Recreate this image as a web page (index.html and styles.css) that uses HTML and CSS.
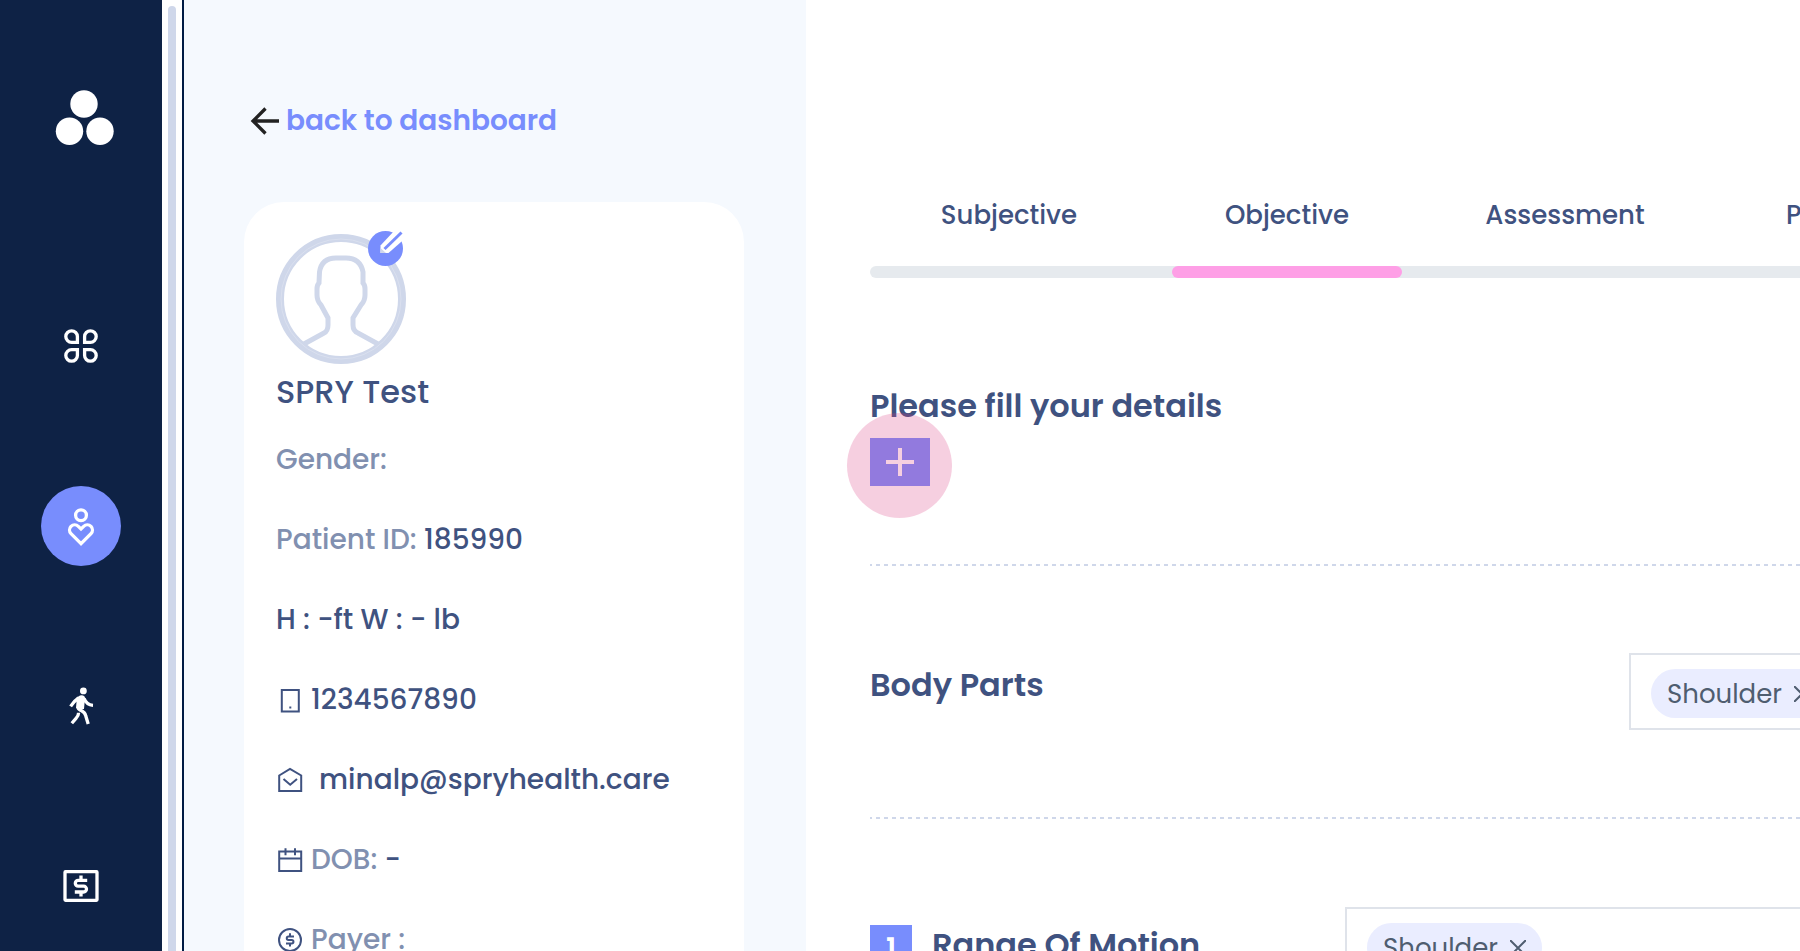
FILE: index.html
```html
<!DOCTYPE html>
<html lang="en">
<head>
<meta charset="UTF-8">
<meta name="viewport" content="width=device-width, initial-scale=1.0">
<title>SPRY - Objective</title>
<link rel="stylesheet" href="styles.css">
</head>
<body>
  <div class="app">
    <nav class="rail">
      <svg class="logo" viewBox="0 0 60 56" aria-label="SPRY">
        <circle cx="30" cy="14" r="13.7"/>
        <circle cx="15.5" cy="41.2" r="13.7"/>
        <circle cx="46" cy="41.2" r="13.7"/>
      </svg>
      <a class="rail-link" href="#" aria-label="Dashboard">
        <svg class="rail-icon" viewBox="-20 -20 40 40">
          <path d="M-3.6-3.6V-9.4A5.8 5.8 0 1 0-9.4-3.6Z"/>
          <path d="M3.6-3.6V-9.4A5.8 5.8 0 1 1 9.4-3.6Z"/>
          <path d="M-3.6 3.6V9.4A5.8 5.8 0 1 1-9.4 3.6Z"/>
          <path d="M3.6 3.6V9.4A5.8 5.8 0 1 0 9.4 3.6Z"/>
        </svg>
      </a>
      <a class="rail-link active" href="#" aria-label="Patients">
        <svg class="rail-icon" viewBox="0 0 40 40">
          <circle cx="20" cy="9.3" r="5.4"/>
          <path d="M20 37.6 10 27.6a5.2 5.2 0 0 1 0-7.2 5.2 5.2 0 0 1 7.3 0L20 23l2.7-2.6a5.2 5.2 0 0 1 7.3 0 5.2 5.2 0 0 1 0 7.2z"/>
        </svg>
      </a>
      <a class="rail-link" href="#" aria-label="Exercises">
        <svg class="rail-icon" viewBox="0 0 40 40">
          <circle class="solid" cx="22.4" cy="4.9" r="3.4"/>
          <path class="solid" d="M15.4 11.8 19 9.6q2.6-.8 4.8 1.2L24.5 15l-.9 1.4-.6 6.5-3.4.6-4.6-1.6.6-7z"/>
          <path d="M9.6 20.4q3.6-5.6 8-8.4M23 12.4q2.6 6.6 9 6.9M17 21.5q.6 2.2 3.6 3.3 3.4 1.7 4.2 5.2l2.400 8"/>
          <path d="M17.6 26.8q0 3-2.6 5.600l-4.200 4.900"/>
        </svg>
      </a>
      <a class="rail-link" href="#" aria-label="Billing">
        <svg class="rail-icon" viewBox="0 0 40 40">
          <rect x="4" y="5.7" width="32" height="28.6" rx=".5"/>
          <path d="M26.2 14.400h-9a2.900 2.900 0 0 0 0 5.800h5.400a2.900 2.900 0 0 1 0 5.800h-8.800M20 9.400v5M20 26v4.600"/>
        </svg>
      </a>
    </nav>
    <div class="scroll-track"><div class="scroll-thumb"></div></div>

    <aside class="patient-panel">
      <a class="back-link" href="#">
        <svg class="back-icon" viewBox="0 0 30 30"><path d="M29 15H3M15.5 2.500 3 15l12.500 12.500"/></svg>
        back to dashboard
      </a>

      <div class="patient-card">
        <div class="avatar">
          <svg class="avatar-image" viewBox="0 0 130 130">
            <circle class="ring" cx="65" cy="65" r="61"/>
            <circle class="ring-line" cx="65" cy="65" r="60"/>
            <path d="M28 110 48 99Q52 97 52 91V84L45 71Q41 67 41 61V55Q41 51 43 49L43.5 38C45 28 51 24 60 24H70C79 24 85 28 87 38V49Q89 51 89 55V61Q89 67 85 71L77 84V91Q77 97 82 99L102 110"/>
          </svg>
          <button class="avatar-edit" type="button" aria-label="Edit photo">
            <svg viewBox="0 0 35 35">
              <circle cx="17.5" cy="17.5" r="17.5"/>
              <path class="pencil" d="M12.5 22v-7.500L27-1l9.500 9L20.500 22z"/>
              <path class="tip" d="M12.5 22v-5l5.500 5z"/>
              <path class="lead" d="M16.5 18 33.500 1.500"/>
            </svg>
          </button>
        </div>
        <h1 class="patient-name">SPRY Test</h1>

        <ul class="info">
          <li><span class="muted">Gender:</span></li>
          <li><span class="muted">Patient ID:</span> 185990</li>
          <li>H : -ft W : - lb</li>
          <li class="with-icon">
            <svg viewBox="0 0 28 28"><path d="M5.8 4h17v21.500h-17zM13.300 21.500h2"/></svg>
            1234567890
          </li>
          <li class="with-icon email">
            <svg viewBox="0 0 28 28"><path d="M3.2 9.500 14 3l11.200 6.500V25h-22zM7.500 13l6.700 5.800L21 13"/></svg>
            minalp@spryhealth.care
          </li>
          <li class="with-icon">
            <svg viewBox="0 0 28 28"><path d="M3.2 5.500h22V25h-22zM3.200 12.500h22M9.500 2.200v7M19 2.200v7"/></svg>
            <span><span class="muted">DOB:</span> -</span>
          </li>
          <li class="with-icon">
            <svg viewBox="0 0 28 28"><circle cx="14" cy="14" r="11"/><path d="M18 10.500h-5.500a1.700 1.700 0 0 0 0 3.500h3.200a1.700 1.700 0 0 1 0 3.500H10M14 7.300v3M14 17.500v3"/></svg>
            <span class="muted">Payer :</span>
          </li>
        </ul>
      </div>
    </aside>

    <main class="content">
      <div class="tabs">
        <a class="tab" href="#">Subjective</a>
        <a class="tab current" href="#">Objective</a>
        <a class="tab" href="#">Assessment</a>
        <a class="tab last" href="#">Plan</a>
      </div>
      <div class="tab-track"></div>

      <section class="details">
        <h2>Please fill your details</h2>
        <button class="add-btn" type="button" aria-label="Add details">
          <svg viewBox="0 0 28 28"><path d="M14 0v28M0 14h28"/></svg>
        </button>
      </section>

      <section class="body-parts">
        <h2>Body Parts</h2>
        <div class="select">
          <span class="chip">Shoulder
            <button type="button" aria-label="Remove Shoulder"><svg viewBox="0 0 16 16"><path d="M0 0 16 16M16 0 0 16"/></svg></button>
          </span>
        </div>
      </section>

      <section class="motion">
        <span class="step">1</span>
        <h2>Range Of Motion</h2>
        <div class="select">
          <span class="chip">Shoulder
            <button type="button" aria-label="Remove Shoulder"><svg viewBox="0 0 16 16"><path d="M0 0 16 16M16 0 0 16"/></svg></button>
          </span>
        </div>
      </section>
    </main>
  </div>
</body>
</html>
```
FILE: styles.css
```css
* {
  box-sizing: border-box;
}

body {
  margin: 0;
  background-color: #fff;
  color: #3f5280;
  font-family: Poppins, Inter, sans-serif;
  font-size: 28px;
  font-weight: 500;
  line-height: 40px;
}

a {
  color: inherit;
  text-decoration: none;
}

button {
  border: none;
  padding: 0;
  cursor: pointer;
}

svg {
  display: block;
  fill: none;
  flex-shrink: 0;
}

h1, h2 {
  margin: 0;
  font-size: 32px;
}

h2 {
  font-weight: 600;
}

.app {
  display: flex;
  height: 100vh;
  overflow: hidden;
}

/* Left navigation */
.rail {
  display: flex;
  flex-direction: column;
  align-items: center;
  flex: 0 0 162px;
  padding-top: 90px;
  background-color: #0e2245;
}

.logo {
  width: 60px;
  height: 56px;
  margin: 0 0 160px 6px;
  fill: #fff;
}

.rail-link {
  display: flex;
  align-items: center;
  justify-content: center;
  flex-shrink: 0;
  width: 80px;
  height: 80px;
  margin-bottom: 100px;
  border-radius: 50%;
}

.rail-link.active {
  background-color: #788dfd;
}

.rail-icon {
  width: 40px;
  height: 40px;
  stroke: #fff;
  stroke-width: 3.3;
}

.rail-icon .solid {
  fill: #fff;
  stroke: none;
}

.scroll-track {
  flex: 0 0 22px;
  padding: 6px 6px 0;
  border-right: 2px solid #001b44;
}

.scroll-thumb {
  width: 8px;
  height: 100%;
  border-radius: 4px 4px 0 0;
  background-color: #cfd7ea;
}

/* Patient column */
.patient-panel {
  flex: 0 0 622px;
  padding: 101px 62px 0 60px;
  background-color: #f5f9fe;
}

.back-link {
  display: flex;
  align-items: center;
  gap: 6px;
  margin: 0 0 61px 6px;
  color: #788dfd;
  font-weight: 600;
}

.back-icon {
  width: 30px;
  height: 30px;
  stroke: #222;
  stroke-width: 3.3;
}

.patient-card {
  min-height: 100%;
  padding: 32px;
  border-radius: 40px;
  background-color: #fff;
}

.avatar {
  position: relative;
  width: 130px;
}

.avatar-image {
  stroke: #cfd7ea;
  stroke-width: 5;
}

.avatar-image .ring {
  stroke-width: 8;
}

.avatar-image .ring-line {
  stroke: #dae0ef;
  stroke-width: 1;
}

.avatar-edit {
  position: absolute;
  top: -3px;
  right: 3px;
  width: 35px;
  height: 35px;
  background: none;
}

.avatar-edit svg {
  fill: #788dfd;
}

.avatar-edit .pencil {
  fill: #fff;
}

.avatar-edit .tip {
  fill: #cfd7ea;
}

.avatar-edit .lead {
  stroke: #788dfd;
  stroke-width: 3;
}

.patient-name {
  margin-top: 8px;
  font-weight: 500;
}

.info {
  display: flex;
  flex-direction: column;
  gap: 40px;
  margin: 28px 0 0;
  padding: 0;
  list-style: none;
  white-space: nowrap;
}

.info .with-icon {
  display: flex;
  align-items: center;
  gap: 7px;
}

.info .email {
  gap: 15px;
}

.info svg {
  width: 28px;
  height: 28px;
  stroke: #3f5280;
  stroke-width: 2;
}

.muted {
  color: #8190b0;
}

/* Form */
.content {
  flex: 1;
  min-width: 0;
  padding: 195px 0 0 64px;
  overflow: hidden;
}

.tabs {
  display: grid;
  grid-template-columns: repeat(4, 278px);
  font-size: 26px;
  text-align: center;
}

.tab {
  position: relative;
  padding-bottom: 31px;
}

.tab.last {
  padding-left: 82px;
  text-align: left;
}

.tab.current::after {
  content: "";
  position: absolute;
  left: 24px;
  right: 24px;
  bottom: -12px;
  height: 12px;
  border-radius: 6px;
  background-color: #fe9fe6;
}

.tab-track {
  height: 12px;
  border-radius: 6px 0 0 6px;
  background-color: #e6eaee;
}

.details,
.body-parts {
  background: repeating-linear-gradient(to right, #cfd7ea 0 4px, transparent 4px 8px) -2px bottom / calc(100% + 2px) 2px no-repeat;
}

.details {
  padding: 108px 0 80px;
}

.add-btn {
  position: relative;
  display: flex;
  justify-content: center;
  width: 60px;
  height: 48px;
  margin-top: 12px;
  padding-top: 10px;
  background-color: #788dfd;
}

.add-btn svg {
  width: 28px;
  height: 28px;
  stroke: #fff;
  stroke-width: 4;
}

/* Click highlight */
.add-btn::after {
  content: "";
  position: absolute;
  top: -25px;
  left: -23px;
  width: 105px;
  height: 105px;
  border-radius: 50%;
  background-color: rgba(220, 70, 136, 0.26);
}

.body-parts {
  display: flex;
  justify-content: space-between;
  padding: 87px 0 89px;
}

.body-parts h2 {
  margin-top: 12px;
}

.body-parts .select {
  width: 171px;
}

.select {
  height: 77px;
  padding: 14px 20px;
  border: 2px solid #dfe3ea;
  border-right: none;
}

.chip {
  display: inline-flex;
  align-items: center;
  gap: 12px;
  height: 49px;
  padding: 0 16px;
  border-radius: 25px;
  background-color: #eaedff;
  color: #4f5d70;
  font-size: 26px;
  font-weight: 400;
}

.chip button {
  background: none;
}

.chip svg {
  width: 16px;
  height: 16px;
  stroke: #4f5d70;
  stroke-width: 2;
}

.motion {
  display: flex;
  padding-top: 88px;
}

.motion h2 {
  flex: 0 0 413px;
  margin-top: 18px;
}

.motion .select {
  flex: 1;
}

.step {
  flex: 0 0 42px;
  height: 42px;
  margin: 18px 20px 0 0;
  background-color: #788dfd;
  color: #fff;
  font-weight: 600;
  line-height: 48px;
  text-align: center;
}
```
